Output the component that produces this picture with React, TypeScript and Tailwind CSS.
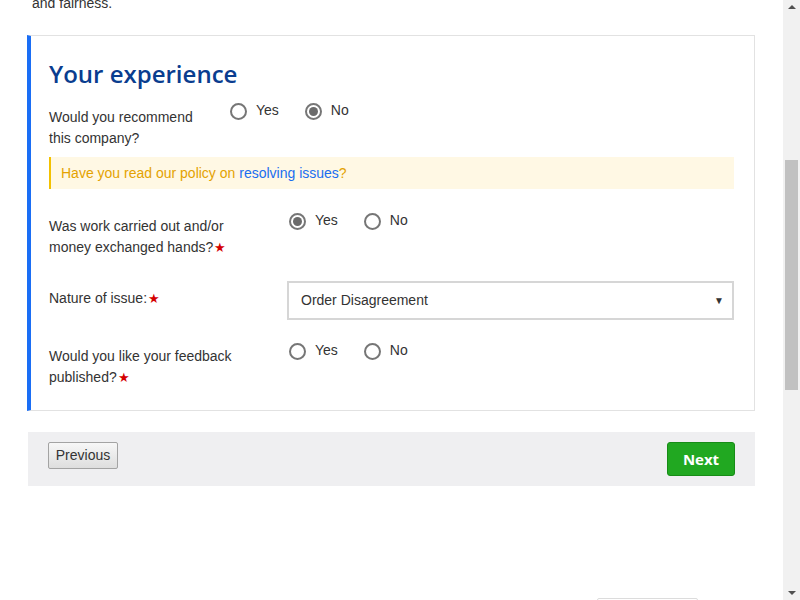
import { ReactNode } from 'react';

const Star = () => <span className="text-[#d40000] text-[13px] ml-[1px]">★</span>;

function Radio({ label, checked }: { label: string; checked?: boolean }) {
  return (
    <label className="flex items-start">
      <span className="mt-[3px] w-[17px] h-[17px] rounded-full border-2 border-[#767676] bg-white flex items-center justify-center">
        {checked && <span className="w-[9px] h-[9px] rounded-full bg-[#6b6b6b]" />}
      </span>
      <span className="ml-[9px] leading-[21px]">{label}</span>
    </label>
  );
}

function RadioPair({ value }: { value?: 'yes' | 'no' }) {
  return (
    <div className="flex items-start gap-[26px]">
      <Radio label="Yes" checked={value === 'yes'} />
      <Radio label="No" checked={value === 'no'} />
    </div>
  );
}

function Row({ label, children, className }: { label: ReactNode; children: ReactNode; className?: string }) {
  return (
    <div className={`flex items-start ${className || ''}`}>
      <div className="w-[238px] pt-[6px] pr-4 leading-[21px]">{label}</div>
      {children}
    </div>
  );
}

export default function App() {
  return (
    <div
      className="flex h-[600px] w-[800px] overflow-hidden bg-white text-[14px] text-[#333]"
      style={{ fontFamily: '"Liberation Sans", Arial, sans-serif' }}
    >
      <main className="flex-1 min-w-0">
        <div className="h-[35px] pl-[32px] flex flex-col">
          <p className="-mt-[7px] leading-[21px]">and fairness.</p>
        </div>

        <section className="ml-[27px] w-[728px] border border-[#e2e2e2] border-l-4 border-l-[#1a6ef5] pt-[22px] pb-[22px] pl-[18px] pr-[20px]">
          <h2 className="text-[24px] leading-[32px] font-semibold text-[#0a3d8f] font-['Open_Sans',sans-serif]">
            Your experience
          </h2>

          <div className="flex items-start mt-[10px]">
            <div className="w-[181px] pt-[7px] leading-[21px]">
              Would you recommend
              <br />
              this company?
            </div>
            <RadioPair value="no" />
          </div>

          <div className="mt-[8px] h-[32px] flex items-center bg-[#fff8e4] border-l-2 border-[#f3c100] pl-[10px] text-[#e4a200]">
            Have you read our policy on&nbsp;<a className="text-[#1a6ef0]">resolving issues</a>?
          </div>

          <Row
            className="mt-[21px]"
            label={
              <>
                Was work carried out and/or
                <br />
                money exchanged hands?<Star />
              </>
            }
          >
            <div className="ml-[2px]">
              <RadioPair value="yes" />
            </div>
          </Row>

          <Row
            className="mt-[23px]"
            label={
              <span className="block pt-px">
                Nature of issue:<Star />
              </span>
            }
          >
            <div className="flex-1 h-[39px] border-2 border-[#d6d6d6] bg-white flex items-center justify-between pl-[12px] pr-[8px]">
              <span>Order Disagreement</span>
              <span className="text-[10px] text-[#333]">▼</span>
            </div>
          </Row>

          <Row
            className="mt-[20px]"
            label={
              <>
                Would you like your feedback
                <br />
                published?<Star />
              </>
            }
          >
            <div className="ml-[2px]">
              <RadioPair />
            </div>
          </Row>
        </section>

        <div className="mt-[21px] ml-[28px] w-[727px] h-[54px] bg-[#efeff1] flex items-start justify-between pt-[10px] pl-[20px] pr-[20px]">
          <button className="h-[27px] w-[70px] rounded-[2px] border border-[#a3a3a3] bg-gradient-to-b from-[#f7f7f7] to-[#dedede] text-[14px] text-[#333]">
            Previous
          </button>
          <button className="h-[34px] w-[68px] rounded-[3px] border border-[#178c17] bg-[#21a821] text-white text-[15px] font-bold font-['Open_Sans',sans-serif]">
            Next
          </button>
        </div>

        <div className="mt-[112px] ml-[597px] w-[101px] h-[24px] border border-[#dcdcdc] rounded-[2px]" />
      </main>

      <aside className="w-[17px] h-[600px] bg-[#f1f1f1] flex flex-col items-center justify-between">
        <span className="mt-[5px] w-0 h-0 border-l-[4px] border-r-[4px] border-b-[4px] border-l-transparent border-r-transparent border-b-[#505050]" />
        <span className="absolute top-[160px] w-[13px] h-[230px] bg-[#c1c1c1]" />
        <span className="mb-[5px] w-0 h-0 border-l-[4px] border-r-[4px] border-t-[4px] border-l-transparent border-r-transparent border-t-[#505050]" />
      </aside>
    </div>
  );
}
